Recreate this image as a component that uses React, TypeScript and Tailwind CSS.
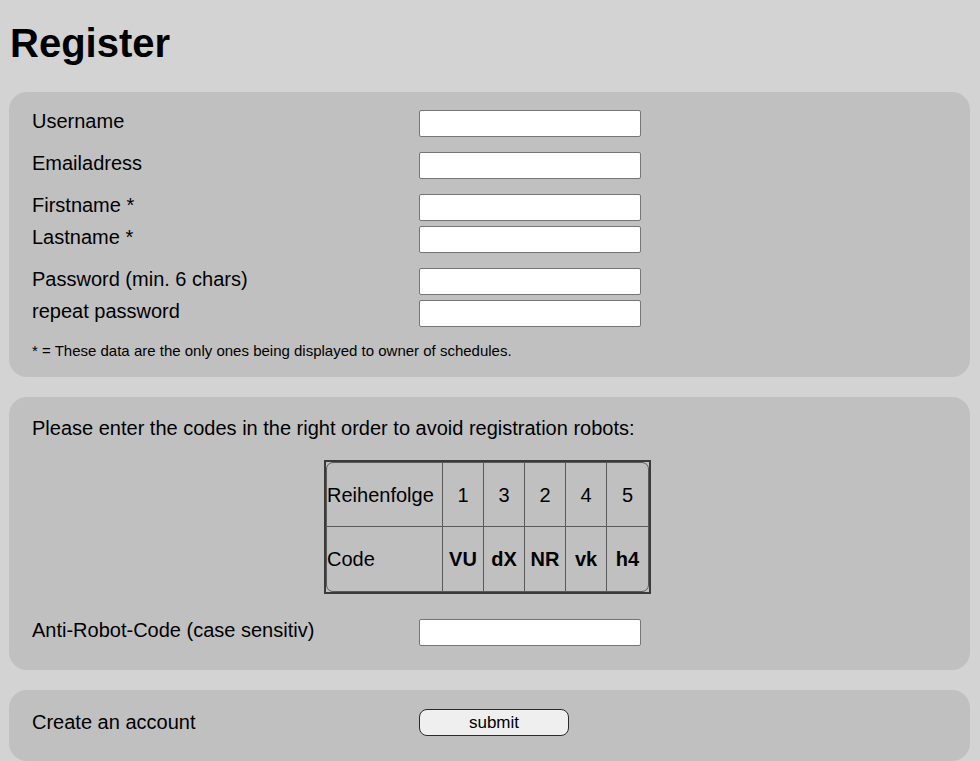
import React from 'react';

const font = { fontFamily: '"Liberation Sans", Arial, sans-serif' };

function Field({ label, type = 'text' }: { label: string; type?: string }) {
  return (
    <div className="flex items-start h-[27px]">
      <label className="w-[387px] shrink-0 leading-[23px]">{label}</label>
      <input
        type={type}
        className="w-[222px] h-[27px] bg-white border border-[#767676] rounded-[2px] outline-none"
      />
    </div>
  );
}

const order = ['1', '3', '2', '4', '5'];
const codes = ['VU', 'dX', 'NR', 'vk', 'h4'];

export default function App() {
  return (
    <div
      className="min-h-screen bg-[#d3d3d3] text-black text-[20px] pl-[9px] pr-[10px] pt-[20px] pb-[20px]"
      style={font}
    >
      <h1 className="text-[40px] font-bold leading-[46px] pl-[1px]">Register</h1>

      <section className="mt-[26px] bg-[#c0c0c0] rounded-[18px] pl-[23px] pt-[18px] pb-[18px]">
        <div className="flex flex-col gap-[15px]">
          <Field label="Username" />
          <Field label="Emailadress" type="email" />
          <div className="flex flex-col gap-[5px]">
            <Field label="Firstname *" />
            <Field label="Lastname *" />
          </div>
          <div className="flex flex-col gap-[5px]">
            <Field label="Password (min. 6 chars)" type="password" />
            <Field label="repeat password" type="password" />
          </div>
        </div>
        <p className="mt-[15px] text-[15px] leading-[17px]">
          * = These data are the only ones being displayed to owner of schedules.
        </p>
      </section>

      <section className="mt-[20px] bg-[#c0c0c0] rounded-[18px] pl-[23px] pr-[23px] pt-[20px] pb-[24px]">
        <p className="leading-[23px]">
          Please enter the codes in the right order to avoid registration robots:
        </p>
        <div className="flex justify-center mt-[20px] pr-[4px]">
          <div className="border-2 border-[#3a3a3a]">
            <table className="border-separate border-spacing-0 border border-[#5a5a5a] rounded-[7px]">
              <tbody>
                <tr className="h-[64px]">
                  <td className="w-[116px] text-left pr-[8px] border-r border-b border-[#5a5a5a]">
                    Reihenfolge
                  </td>
                  {order.map((n, i) => (
                    <td
                      key={i}
                      className={`w-[41px] text-center border-b border-[#5a5a5a] ${i < 4 ? 'border-r' : ''}`}
                    >
                      {n}
                    </td>
                  ))}
                </tr>
                <tr className="h-[64px]">
                  <td className="text-left border-r border-[#5a5a5a]">Code</td>
                  {codes.map((c, i) => (
                    <td
                      key={i}
                      className={`text-center font-bold border-[#5a5a5a] ${i < 4 ? 'border-r' : ''}`}
                    >
                      {c}
                    </td>
                  ))}
                </tr>
              </tbody>
            </table>
          </div>
        </div>
        <div className="mt-[25px]">
          <Field label="Anti-Robot-Code (case sensitiv)" />
        </div>
      </section>

      <section className="mt-[20px] bg-[#c0c0c0] rounded-[18px] pl-[23px] pt-[19px] pb-[25px]">
        <div className="flex items-start h-[27px]">
          <span className="w-[387px] shrink-0 leading-[23px] pt-[2px]">Create an account</span>
          <button
            type="submit"
            className="w-[150px] h-[27px] bg-[#efefef] border border-[#2a2a2a] rounded-[8px] text-[17px] leading-[20px]"
            style={font}
          >
            submit
          </button>
        </div>
      </section>
    </div>
  );
}
